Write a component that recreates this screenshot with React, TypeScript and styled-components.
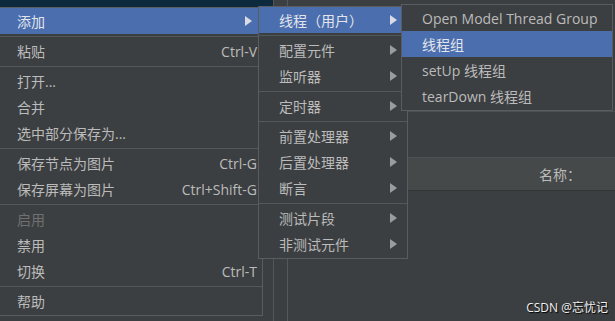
import styled, { createGlobalStyle } from 'styled-components';

const GlobalStyle = createGlobalStyle`
  html, body {
    margin: 0;
    padding: 0;
    background: #3c3f41;
  }
`;

const Screen = styled.div`
  position: relative;
  display: flex;
  width: 615px;
  height: 321px;
  overflow: hidden;
  background: #3c3f41;
  font-family: "Open Sans", "Noto Sans CJK SC", sans-serif;
  font-size: 14px;
  color: #bbbbbb;
`;

const TreePane = styled.div`
  width: 273px;
  border-right: 1px solid #525659;
  display: flex;
  flex-direction: column;
`;

const SelectedRow = styled.div`
  height: 7px;
  background: #0d293e;
`;

const Gutter = styled.div`
  width: 13px;
  border-right: 1px solid #555859;
`;

const MainPane = styled.div`
  flex: 1;
  display: flex;
  flex-direction: column;
`;

const Section = styled.div<{ $height: number }>`
  height: ${(p) => p.$height}px;
  border-bottom: 1px solid #4d5052;
`;

const TableHeader = styled.div`
  height: 32px;
  display: flex;
  align-items: center;
  padding-left: 251px;
  background: #45494a;
  border-bottom: 1px solid #323435;
`;

const TableBody = styled.div`
  flex: 1;
`;

const Popup = styled.div<{ $left: number; $top: number; $width: number }>`
  position: absolute;
  left: ${(p) => p.$left}px;
  top: ${(p) => p.$top}px;
  width: ${(p) => p.$width}px;
  box-sizing: border-box;
  background: #3c3f41;
  border: 1px solid #5a5d5f;
  padding-bottom: 1px;
`;

const Item = styled.div<{ $active?: boolean; $disabled?: boolean; $indent: number }>`
  display: flex;
  align-items: center;
  height: 26px;
  padding: 0 5px 0 ${(p) => p.$indent}px;
  white-space: nowrap;
  background: ${(p) => (p.$active ? '#4b6eaf' : 'transparent')};
  color: ${(p) => (p.$disabled ? '#707070' : p.$active ? '#e2e5ea' : '#bbbbbb')};
`;

const Label = styled.span`
  flex: 1;
`;

const Shortcut = styled.span`
  font-size: 14px;
`;

const Arrow = styled.span<{ $active?: boolean }>`
  width: 0;
  height: 0;
  margin-right: 5px;
  border-top: 5px solid transparent;
  border-bottom: 5px solid transparent;
  border-left: 7px solid ${(p) => (p.$active ? '#d9dde3' : '#9a9d9f')};
`;

const Separator = styled.div`
  height: 1px;
  margin: 2px 0 1px;
  background: #555859;
`;

const Watermark = styled.div`
  position: absolute;
  right: 7px;
  bottom: 5px;
  font-size: 12px;
  color: #f2f2f2;
  text-shadow: 1px 1px 1px #000;
`;

type Entry =
  | { sep: true }
  | { label: string; shortcut?: string; sub?: boolean; active?: boolean; disabled?: boolean };

const mainMenu: Entry[] = [
  { label: '添加', sub: true, active: true },
  { sep: true },
  { label: '粘贴', shortcut: 'Ctrl-V' },
  { sep: true },
  { label: '打开...' },
  { label: '合并' },
  { label: '选中部分保存为...' },
  { sep: true },
  { label: '保存节点为图片', shortcut: 'Ctrl-G' },
  { label: '保存屏幕为图片', shortcut: 'Ctrl+Shift-G' },
  { sep: true },
  { label: '启用', disabled: true },
  { label: '禁用' },
  { label: '切换', shortcut: 'Ctrl-T' },
  { sep: true },
  { label: '帮助' },
];

const addMenu: Entry[] = [
  { label: '线程（用户）', sub: true, active: true },
  { sep: true },
  { label: '配置元件', sub: true },
  { label: '监听器', sub: true },
  { sep: true },
  { label: '定时器', sub: true },
  { sep: true },
  { label: '前置处理器', sub: true },
  { label: '后置处理器', sub: true },
  { label: '断言', sub: true },
  { sep: true },
  { label: '测试片段', sub: true },
  { label: '非测试元件', sub: true },
];

const threadMenu: Entry[] = [
  { label: 'Open Model Thread Group' },
  { label: '线程组', active: true },
  { label: 'setUp 线程组' },
  { label: 'tearDown 线程组' },
];

function Menu({ entries, indent }: { entries: Entry[]; indent: number }) {
  return (
    <>
      {entries.map((e, i) =>
        'sep' in e ? (
          <Separator key={i} />
        ) : (
          <Item key={i} $active={e.active} $disabled={e.disabled} $indent={indent}>
            <Label>{e.label}</Label>
            {e.shortcut && <Shortcut>{e.shortcut}</Shortcut>}
            {e.sub && <Arrow $active={e.active} />}
          </Item>
        )
      )}
    </>
  );
}

export default function App() {
  return (
    <>
      <GlobalStyle />
      <Screen>
        <TreePane>
          <SelectedRow />
        </TreePane>
        <Gutter />
        <MainPane>
          <Section $height={111} />
          <Section $height={45} />
          <TableHeader>名称：</TableHeader>
          <TableBody />
        </MainPane>

        <Popup $left={-1} $top={7} $width={264}>
          <Menu entries={mainMenu} indent={17} />
        </Popup>
        <Popup $left={258} $top={6} $width={150}>
          <Menu entries={addMenu} indent={20} />
        </Popup>
        <Popup $left={401} $top={4} $width={212}>
          <Menu entries={threadMenu} indent={20} />
        </Popup>

        <Watermark>CSDN @忘忧记</Watermark>
      </Screen>
    </>
  );
}
